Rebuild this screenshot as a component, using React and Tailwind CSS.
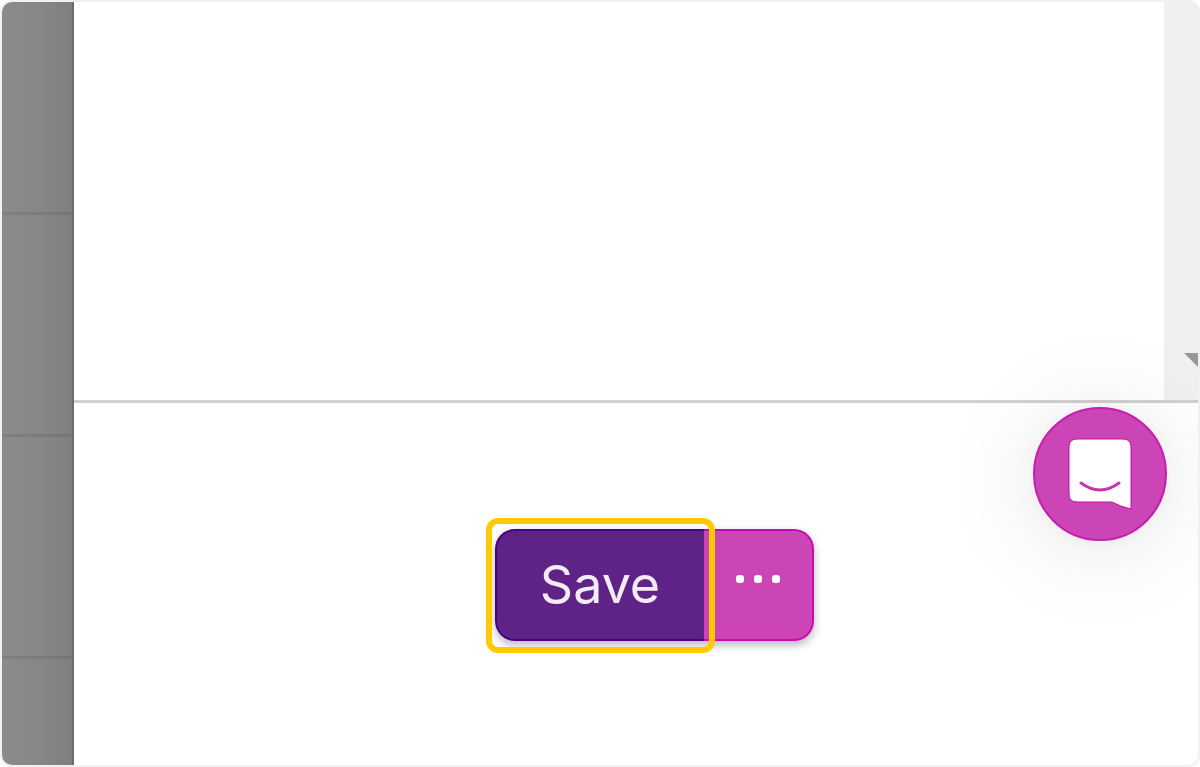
const backdropRows = ['h-[210px]', 'h-[219px]', 'h-[219px]']

function Backdrop() {
  return (
    <div className="w-[72px] shrink-0 bg-linear-to-r from-[#8b8b8b] via-[#868686] via-60% to-[#7e7e7e] border-r-2 border-[#6a6a6a]">
      {backdropRows.map((height, i) => (
        <div key={i} className={`${height} box-content border-b-3 border-black/8`} />
      ))}
    </div>
  )
}

function ScrollArea() {
  return (
    <div className="flex flex-1 border-b-3 border-[#d0d0d0]">
      <div className="flex-1" />
      <div className="flex w-[34px] items-end justify-end overflow-hidden bg-[#f0f0f0] pb-8">
        <svg className="h-4 w-[14px]" viewBox="0 0 14 16" aria-hidden="true">
          <path d="M0 1H14V15Z" fill="#979797" />
        </svg>
      </div>
    </div>
  )
}

function SplitButton() {
  return (
    <div className="flex h-[112px] rounded-[20px] shadow-[0_4px_8px_rgba(60,40,80,0.35)]">
      <div className="relative">
        <button
          type="button"
          className="h-full w-[209px] rounded-l-[20px] border-y-2 border-l-2 border-[#4a0080] bg-[#5f2387] text-[52px] leading-none text-[#f3ecf7]"
        >
          Save
        </button>
        <span className="pointer-events-none absolute -top-[11px] -right-[11px] -bottom-3 -left-[9px] rounded-xl border-6 border-[#ffcb00]" />
      </div>
      <button
        type="button"
        aria-label="More save options"
        className="flex w-[110px] items-center justify-center gap-[10px] rounded-r-[20px] border-y-2 border-r-2 border-[#c60cae] bg-[#cb45b6] pb-3"
      >
        <span className="size-2 rounded-[3px] bg-white" />
        <span className="size-2 rounded-[3px] bg-white" />
        <span className="size-2 rounded-[3px] bg-white" />
      </button>
    </div>
  )
}

function ChatLauncher() {
  return (
    <button
      type="button"
      aria-label="Open chat"
      className="absolute right-[31px] bottom-56 flex size-[134px] items-center justify-center rounded-full border-2 border-[#c81db0] bg-[#cb45b6] shadow-[0_3px_17px_rgba(0,0,0,0.03),0_6px_100px_rgba(0,0,0,0.11)]"
    >
      <svg className="h-[72px] w-16" viewBox="0 0 64 72" fill="none" aria-hidden="true">
        <path
          d="M9 1H55Q63 1 63 9V71Q53 69 44 64H9Q1 64 1 56V9Q1 1 9 1Z"
          fill="#fff"
          stroke="#c60cae"
          strokeWidth="1"
        />
        <path d="M13 45Q32 59 51 45" stroke="#c736b2" strokeWidth="3" strokeLinecap="round" />
      </svg>
    </button>
  )
}

export default function App() {
  return (
    <div className="relative flex h-screen overflow-hidden rounded-xl border-2 border-[#f0f0f5] bg-white font-['Inter',sans-serif]">
      <Backdrop />
      <main className="flex flex-1 flex-col">
        <ScrollArea />
        <footer className="flex h-[362px] items-center justify-center pt-0.5 pl-9">
          <SplitButton />
        </footer>
      </main>
      <ChatLauncher />
    </div>
  )
}
